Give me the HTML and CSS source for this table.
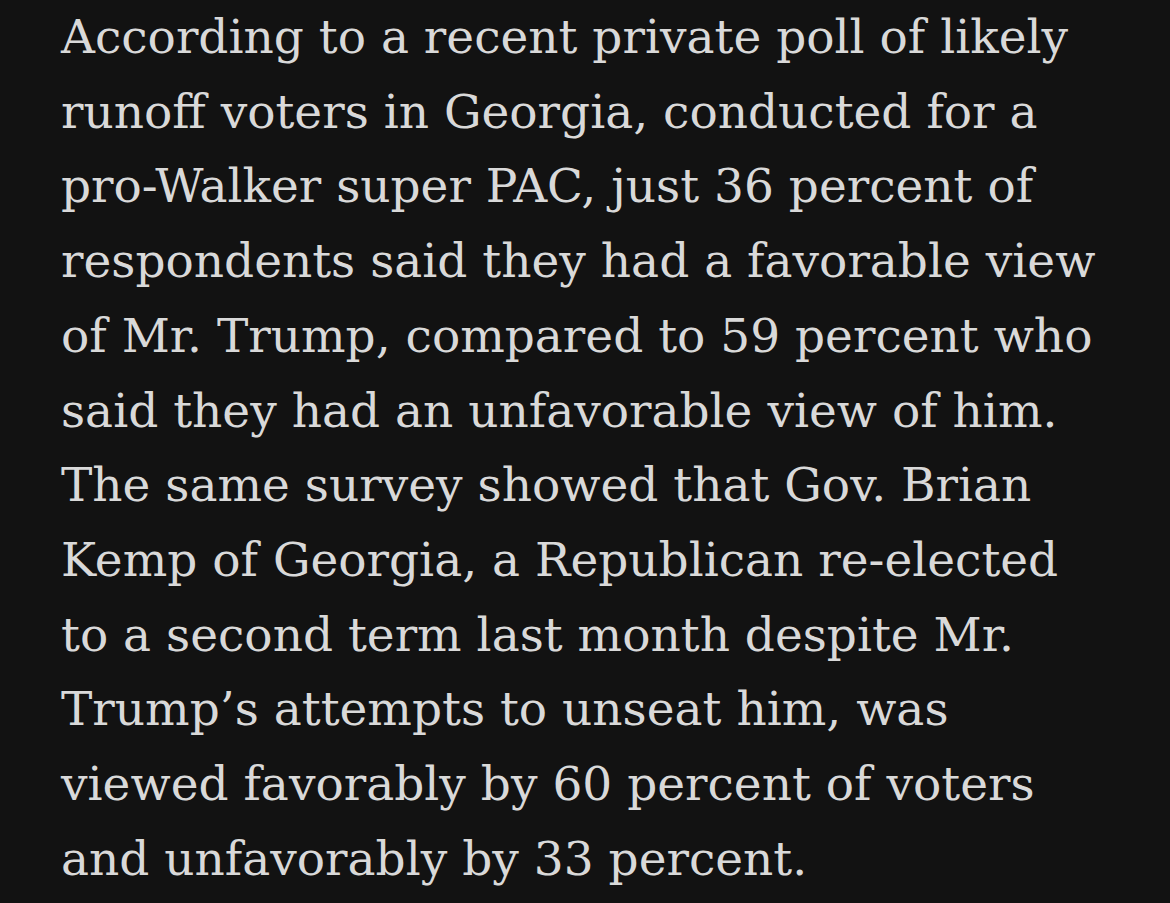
FILE: index.html
```html
<!DOCTYPE html>
<html lang="en">
<head>
<meta charset="utf-8">
<link rel="stylesheet" href="styles.css">
</head>
<body>
<main class="article">
<p class="para">
<span class="line">According to a recent private poll of likely</span>
<span class="line">runoff voters in Georgia, conducted for a</span>
<span class="line">pro-Walker super PAC, just 36 percent of</span>
<span class="line">respondents said they had a favorable view</span>
<span class="line">of Mr. Trump, compared to 59 percent who</span>
<span class="line">said they had an unfavorable view of him.</span>
<span class="line">The same survey showed that Gov. Brian</span>
<span class="line">Kemp of Georgia, a Republican re-elected</span>
<span class="line">to a second term last month despite Mr.</span>
<span class="line">Trump’s attempts to unseat him, was</span>
<span class="line">viewed favorably by 60 percent of voters</span>
<span class="line">and unfavorably by 33 percent.</span>
</p>
</main>
</body>
</html>
```

FILE: styles.css
```css
html, body {
  margin: 0;
  padding: 0;
  background: #121212;
}
.article {
  padding: 0 0 0 61px;
}
.para {
  margin: 0;
  padding-top: 0;
  font-family: "DejaVu Serif", "Liberation Serif", serif;
  font-size: 47px;
  line-height: 74.7px;
  color: #d9d9d9;
  white-space: nowrap;
}
.line {
  display: block;
}
```
